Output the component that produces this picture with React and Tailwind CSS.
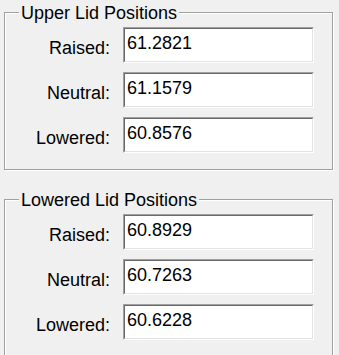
const GROUPS = [
  {
    title: 'Upper Lid Positions',
    rows: [
      ['Raised:', '61.2821'],
      ['Neutral:', '61.1579'],
      ['Lowered:', '60.8576'],
    ],
  },
  {
    title: 'Lowered Lid Positions',
    rows: [
      ['Raised:', '60.8929'],
      ['Neutral:', '60.7263'],
      ['Lowered:', '60.6228'],
    ],
  },
];

/* sunken win32 style edit box */
function Edit({ value }) {
  return (
    <div className="w-[191px] h-[36px] border border-t-[#a0a0a0] border-l-[#a0a0a0] border-b-white border-r-white">
      <div className="h-full border border-t-[#696969] border-l-[#696969] border-b-[#e3e3e3] border-r-[#e3e3e3] bg-white pl-[2px] pt-[4px] leading-[20px]">
        {value}
      </div>
    </div>
  );
}

function Group({ title, rows, className }) {
  return (
    <div
      className={`relative w-[329px] h-[158px] ml-[4px] border border-[#a0a0a0] shadow-[inset_1px_1px_0_#fff,1px_1px_0_#fff] pt-[14px] ${className}`}
    >
      <span className="absolute left-[14px] -top-[10px] px-[2px] bg-[#f0f0f0] leading-[20px]">
        {title}
      </span>
      <div className="flex flex-col gap-[9px]">
        {rows.map(([label, value]) => (
          <div key={label} className="flex items-start">
            <span className="w-[105px] text-right mt-[11px] leading-[20px]">{label}</span>
            <div className="ml-[13px]">
              <Edit value={value} />
            </div>
          </div>
        ))}
      </div>
    </div>
  );
}

export default function App() {
  return (
    <div className="w-[339px] h-[355px] overflow-hidden bg-[#f0f0f0] text-black text-[18px] font-['Liberation_Sans',Arial,sans-serif] pt-[12px]">
      <Group {...GROUPS[0]} />
      <Group {...GROUPS[1]} className="mt-[29px]" />
    </div>
  );
}
